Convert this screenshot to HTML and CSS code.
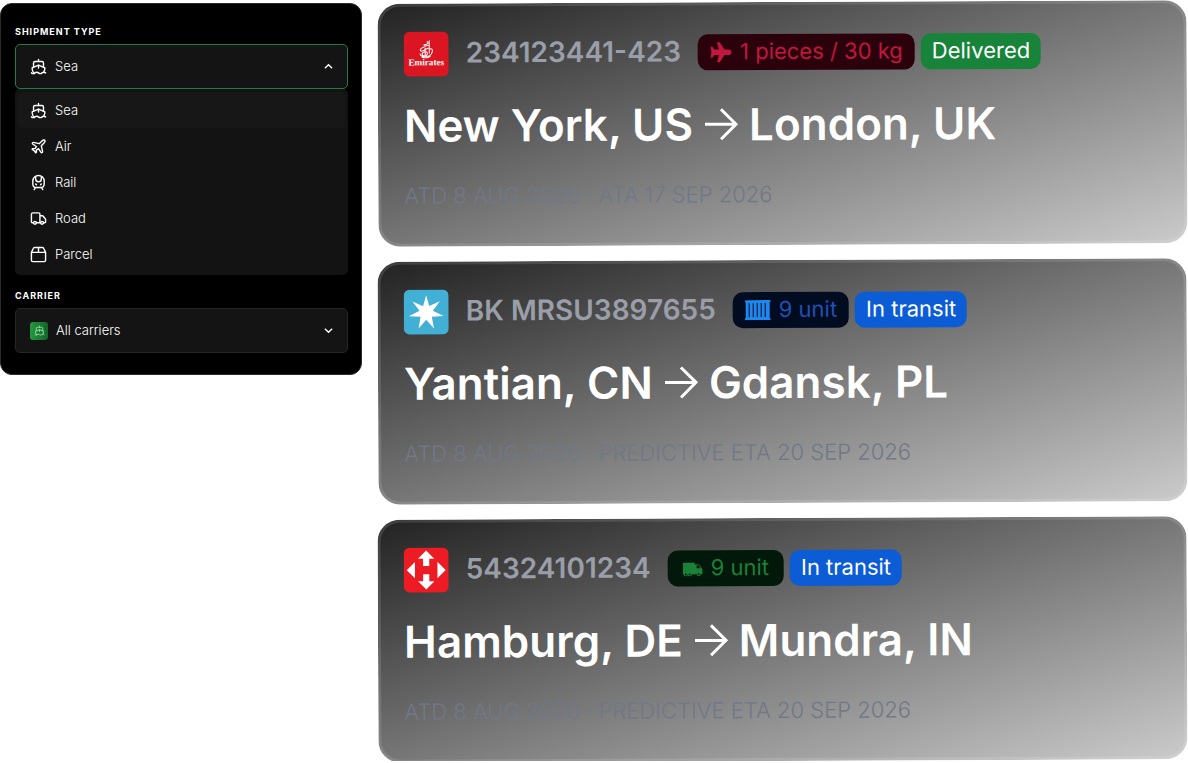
FILE: index.html
```
<!DOCTYPE html>
<html lang="en">
<head>
    <meta charset="UTF-8">
    <meta name="viewport" content="width=device-width, initial-scale=1.0">
    <title>Shipments</title>
    <link rel="stylesheet" href="styles.css">
</head>
<body>
    <!-- Shared icons -->
    <svg class="sprite" aria-hidden="true">
        <symbol id="ship" viewBox="0 0 24 24">
            <path d="M12 10.189V14M12 2v3M19 13V7a2 2 0 0 0-2-2H7a2 2 0 0 0-2 2v6"/>
            <path d="M19.38 20A11.6 11.6 0 0 0 21 14l-8.188-3.639a2 2 0 0 0-1.624 0L3 14a11.6 11.6 0 0 0 2.81 7.76"/>
            <path d="M2 21c.6.5 1.2 1 2.5 1 2.5 0 2.5-2 5-2 1.3 0 1.9.5 2.5 1s1.2 1 2.5 1c2.5 0 2.5-2 5-2 1.3 0 1.9.5 2.5 1"/>
        </symbol>
        <symbol id="arrow" viewBox="0 0 34 34">
            <path d="M1 17h31M17 2l15 15-15 15"/>
        </symbol>
    </svg>

    <main class="page">
        <form class="filters">
            <label class="label" for="type">Shipment type</label>
            <div class="field open">
                <svg class="icon"><use href="#ship"/></svg>
                <select id="type">
                    <option>Sea</option>
                    <option>Air</option>
                    <option>Rail</option>
                    <option>Road</option>
                    <option>Parcel</option>
                </select>
                <svg class="chevron" viewBox="0 0 10 10"><path d="m1 7 4-4 4 4"/></svg>
            </div>
            <div class="menu">
                <button type="button" class="item active">
                    <svg class="icon"><use href="#ship"/></svg>Sea
                </button>
                <button type="button" class="item">
                    <svg class="icon" viewBox="0 0 24 24"><path d="M17.8 19.2 16 11l3.5-3.5C21 6 21.5 4 21 3c-1-.5-3 0-4.5 1.5L13 8 4.8 6.2c-.5-.1-.9.1-1.1.5l-.3.5c-.2.5-.1 1 .3 1.3L9 12l-2 3H4l-1 1 3 2 2 3 1-1v-3l3-2 3.5 5.3c.3.4.8.5 1.3.3l.5-.2c.4-.3.6-.7.5-1.2z"/></svg>Air
                </button>
                <button type="button" class="item">
                    <svg class="icon" viewBox="0 0 24 24"><path d="M8 3.1V7a4 4 0 0 0 8 0V3.1M9 15l-1-1M15 15l1-1M9 19c-2.8 0-5-2.2-5-5v-4a8 8 0 0 1 16 0v4c0 2.8-2.2 5-5 5ZM8 19l-2 3M16 19l2 3"/></svg>Rail
                </button>
                <button type="button" class="item">
                    <svg class="icon" viewBox="0 0 24 24"><path d="M14 18V6a2 2 0 0 0-2-2H4a2 2 0 0 0-2 2v11a1 1 0 0 0 1 1h2M15 18H9M19 18h2a1 1 0 0 0 1-1v-3.65a1 1 0 0 0-.22-.624l-3.48-4.35A1 1 0 0 0 17.52 8H14"/><circle cx="17" cy="18" r="2"/><circle cx="7" cy="18" r="2"/></svg>Road
                </button>
                <button type="button" class="item">
                    <svg class="icon" viewBox="0 0 24 24"><path d="M2 9h20v11a2 2 0 0 1-2 2H4a2 2 0 0 1-2-2V9ZM2 9l2.6-5.5A2 2 0 0 1 6.4 2h11.2a2 2 0 0 1 1.8 1.500L22 9M12 2v7"/></svg>Parcel
                </button>
            </div>

            <label class="label" for="carrier">Carrier</label>
            <div class="field">
                <span class="carrier-icon"><svg class="icon"><use href="#ship"/></svg></span>
                <select id="carrier">
                    <option>All carriers</option>
                </select>
                <svg class="chevron" viewBox="0 0 10 10"><path d="m1 3 4 4 4-4"/></svg>
            </div>
        </form>

        <section class="cards">
            <article class="card">
                <div class="head">
                    <svg class="logo" viewBox="0 0 44 44" role="img" aria-label="Emirates">
                        <rect width="44" height="44" rx="6" fill="#dc1522"/>
                        <g fill="none" stroke="#fff" stroke-width="1" stroke-linecap="round">
                            <path d="M23 10c2 1 0 3-3 3 0 2 3 1 5 0M25 9v12M20 15c-3 1-5 3-3 4s5-3 8-3M16 22c1 3 6 3 7 0 1-4-5-2-5 0s6 4 9 0c2-3 1-6-1-5M18 25c3 1 6 1 8-1M21 16v7"/>
                        </g>
                        <text x="22" y="33" class="emirates">Emirates</text>
                    </svg>
                    <span class="number">234123441-423</span>
                    <div class="badges">
                        <span class="badge air">
                            <svg viewBox="0 0 24 24"><path transform="rotate(90 12 12)" d="M23 16v-3l-8-5V3.500C15 2 14 0 12 0S9 2 9 3.500V8l-8 5v3l8-2v5l-3 2v2l6-1 6 1v-2l-3-2v-5z"/></svg>
                            1 pieces / 30 kg
                        </span>
                        <span class="badge delivered">Delivered</span>
                    </div>
                </div>
                <h2>New York, US <svg class="arrow"><use href="#arrow"/></svg> London, UK</h2>
                <p class="dates">ATD 8 AUG 2026 · ATA 17 SEP 2026</p>
            </article>

            <article class="card">
                <div class="head">
                    <svg class="logo" viewBox="0 0 44 44" role="img" aria-label="Maersk">
                        <rect width="44" height="44" rx="6" fill="#42b0d5"/>
                        <path fill="#fff" d="M22 5.500 25 16.200 35.400 11.500 28.500 20.700 39 26 27.500 26.500 29.500 38 22 29.500 14.500 38 16.500 26.500 5 26 15.500 20.700 8.600 11.500 19 16.200Z"/>
                    </svg>
                    <span class="number">BK MRSU3897655</span>
                    <div class="badges">
                        <span class="badge sea">
                            <svg class="container" viewBox="0 0 26 20"><path d="M0 0h26v2h-1v16h1v2H0v-2h1V2H0zM4 3v14h1V3zM8 3v14h1V3zM12 3v14h1V3zM16 3v14h1V3zM20 3v14h1V3z" fill-rule="evenodd"/></svg>
                            9 unit
                        </span>
                        <span class="badge transit">In transit</span>
                    </div>
                </div>
                <h2>Yantian, CN <svg class="arrow"><use href="#arrow"/></svg> Gdansk, PL</h2>
                <p class="dates">ATD 8 AUG 2026 · PREDICTIVE ETA 20 SEP 2026</p>
            </article>

            <article class="card">
                <div class="head">
                    <svg class="logo" viewBox="0 0 44 44" role="img" aria-label="Nova Poshta">
                        <rect width="44" height="44" rx="6" fill="#ed1c24"/>
                        <path fill="#fff" d="m22 3 8 8h-5v7h-6v-7h-5ZM22 41l8-8h-5v-7h-6v7h-5ZM3 22l8-8v16ZM41 22l-8-8v16Z"/>
                    </svg>
                    <span class="number">54324101234</span>
                    <div class="badges">
                        <span class="badge road">
                            <svg class="truck" viewBox="0 0 20 14"><path fill-rule="evenodd" d="M1 0h11v2h4l4 5v5h-2a2 2 0 0 1-4 0H9a2 2 0 0 1-4 0 2 2 0 0 1-4 0H0V1a1 1 0 0 1 1-1ZM14 3v3h4l-2-3ZM3 11a1 1 0 1 0 0 2 1 1 0 0 0 0-2ZM7 11a1 1 0 1 0 0 2 1 1 0 0 0 0-2ZM16 11a1 1 0 1 0 0 2 1 1 0 0 0 0-2Z"/></svg>
                            9 unit
                        </span>
                        <span class="badge transit">In transit</span>
                    </div>
                </div>
                <h2>Hamburg, DE <svg class="arrow"><use href="#arrow"/></svg> Mundra, IN</h2>
                <p class="dates">ATD 8 AUG 2026 · PREDICTIVE ETA 20 SEP 2026</p>
            </article>
        </section>
    </main>
</body>
</html>
```
FILE: styles.css
```
* {
    box-sizing: border-box;
}
body {
    margin: 0;
    background-color: #fff;
    color: #fff;
    font-family: Inter, "Liberation Sans", sans-serif;
}
.sprite {
    display: none;
}
.page {
    display: grid;
    grid-template-columns: 362px 1fr;
    gap: 16px;
    align-items: start;
    padding: 2px 1px 0 0;
}

/* Filters */
.filters {
    margin-top: 1px;
    padding: 21px 13px 21px 14px;
    background-color: #000;
    border: 1px solid #2b2b2b;
    border-radius: 12px;
}
.label {
    display: block;
    margin-bottom: 6px;
    font-size: 9px;
    font-weight: 700;
    line-height: 13px;
    letter-spacing: 1px;
    text-transform: uppercase;
}
.field {
    display: flex;
    align-items: center;
    gap: 8px;
    height: 45px;
    padding: 0 14px;
    background-color: #141414;
    border: 1px solid #262626;
    border-radius: 5px;
}
.field.open {
    border-color: #237a4b;
}
.field select {
    flex: 1;
    height: 100%;
    padding: 0 0 2px;
    appearance: none;
    background: none;
    border: none;
    outline: none;
    color: #fff;
    font: inherit;
    font-size: 13px;
    font-weight: 300;
}
.icon {
    width: 17px;
    height: 17px;
    fill: none;
    stroke: #fff;
    stroke-width: 2;
    stroke-linecap: round;
    stroke-linejoin: round;
}
.chevron {
    width: 9px;
    height: 9px;
    fill: none;
    stroke: #fff;
    stroke-width: 1.5;
}
.menu {
    margin-bottom: 14px;
    padding: 3px;
    background-color: #131313;
    border-radius: 5px;
}
.item {
    display: flex;
    align-items: center;
    gap: 8px;
    width: 100%;
    height: 36px;
    padding: 0 12px;
    background: none;
    border: none;
    border-radius: 4px;
    color: #fff;
    font: inherit;
    font-size: 13px;
    font-weight: 300;
    cursor: pointer;
}
.item.active {
    background-color: #171717;
}
.carrier-icon {
    display: grid;
    place-items: center;
    width: 18px;
    height: 18px;
    background: linear-gradient(90deg, #25993f, #14632a);
    border-radius: 3px;
}
.carrier-icon .icon {
    width: 11px;
    height: 11px;
    stroke: #8fe0a2;
}

/* Shipment cards */
.cards {
    display: grid;
    gap: 15px;
}
.card {
    padding: 25px 23px 32px;
    background: linear-gradient(to bottom right, #222, #cbcbcb) border-box;
    border: 3px solid rgba(255, 255, 255, 0.12);
    border-radius: 22px;
    transform: rotate(-0.25deg);
}
.head {
    display: flex;
    align-items: center;
    gap: 17px;
    height: 44px;
}
.logo {
    width: 45px;
    height: 45px;
}
.emirates {
    fill: #fff;
    font-family: "Liberation Serif", serif;
    font-size: 9px;
    font-weight: 700;
    text-anchor: middle;
}
.number {
    color: #9a9ea8;
    font-size: 28px;
    font-weight: 600;
    line-height: 36px;
    padding-bottom: 3px;
}
.badges {
    display: flex;
    gap: 6px;
}
.badge {
    display: flex;
    align-items: center;
    gap: 8px;
    height: 36px;
    padding: 0 11px 3px;
    border-radius: 10px;
    font-size: 22px;
    white-space: nowrap;
}
.badge svg {
    width: 22px;
    height: 22px;
    margin-top: 3px;
    fill: currentColor;
}
.badge .container {
    width: 26px;
    height: 20px;
    fill: #1e88f0;
}
.badge .truck {
    width: 20px;
    height: 14px;
    margin-top: 4px;
}
.air,
.sea {
    padding: 0 12px 3px;
}
.air {
    background-color: #2b020c;
    color: #c2173f;
}
.sea {
    background-color: #010c20;
    color: #1f51b5;
}
.road {
    padding: 0 15px 3px;
    background-color: #02180a;
    color: #1b8038;
}
.delivered {
    background-color: #17843a;
}
.transit {
    background-color: #0b5cd5;
}
h2 {
    display: flex;
    align-items: center;
    gap: 11px;
    margin: 22px 0 26px;
    font-size: 44px;
    font-weight: 600;
    line-height: 56px;
    white-space: nowrap;
}
.arrow {
    width: 34px;
    height: 34px;
    fill: none;
    stroke: #fff;
    stroke-width: 3;
}
.dates {
    margin: 0;
    color: #707888;
    font-size: 22px;
    font-weight: 300;
    line-height: 32px;
}
```
